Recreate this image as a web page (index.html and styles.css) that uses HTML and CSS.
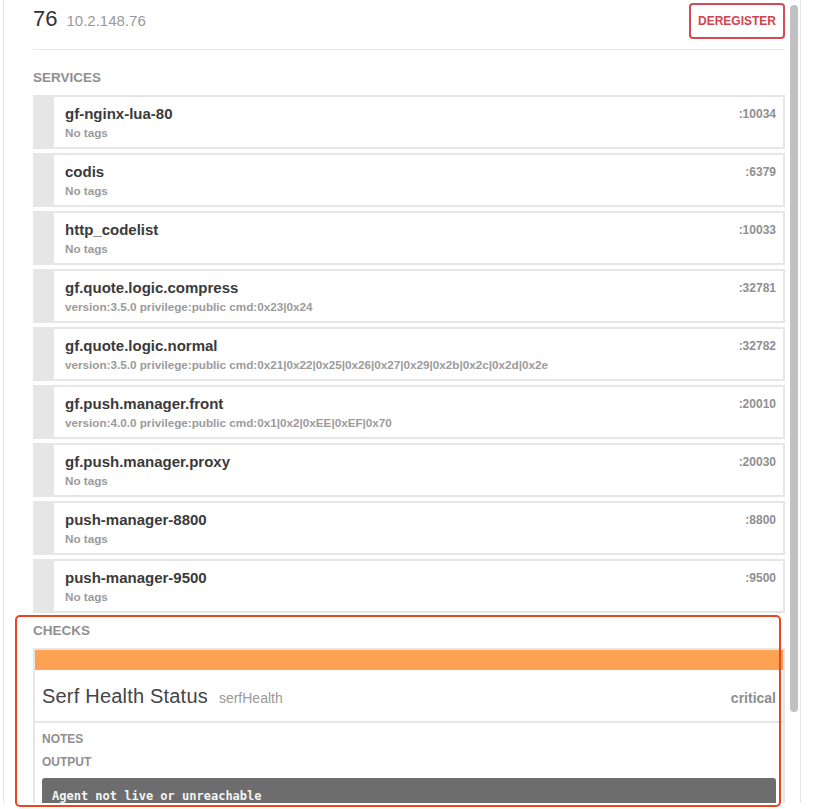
FILE: index.html
```html
<!DOCTYPE html>
<html>
<head>
<meta charset="utf-8">
<link rel="stylesheet" href="styles.css">
</head>
<body>
<div class="frame">
  <div class="content">
    <div class="node-header">
      <h1 class="node-title">76<span class="node-ip">10.2.148.76</span></h1>
      <button class="btn-deregister">DEREGISTER</button>
    </div>

    <h2 class="section-title services-title">SERVICES</h2>
    <div class="service-list">
      <div class="service">
        <div class="service-main"><div class="service-name">gf-nginx-lua-80</div><div class="service-tags">No tags</div></div>
        <div class="service-port">:10034</div>
      </div>
      <div class="service">
        <div class="service-main"><div class="service-name">codis</div><div class="service-tags">No tags</div></div>
        <div class="service-port">:6379</div>
      </div>
      <div class="service">
        <div class="service-main"><div class="service-name">http_codelist</div><div class="service-tags">No tags</div></div>
        <div class="service-port">:10033</div>
      </div>
      <div class="service">
        <div class="service-main"><div class="service-name">gf.quote.logic.compress</div><div class="service-tags">version:3.5.0 privilege:public cmd:0x23|0x24</div></div>
        <div class="service-port">:32781</div>
      </div>
      <div class="service">
        <div class="service-main"><div class="service-name">gf.quote.logic.normal</div><div class="service-tags">version:3.5.0 privilege:public cmd:0x21|0x22|0x25|0x26|0x27|0x29|0x2b|0x2c|0x2d|0x2e</div></div>
        <div class="service-port">:32782</div>
      </div>
      <div class="service">
        <div class="service-main"><div class="service-name">gf.push.manager.front</div><div class="service-tags">version:4.0.0 privilege:public cmd:0x1|0x2|0xEE|0xEF|0x70</div></div>
        <div class="service-port">:20010</div>
      </div>
      <div class="service">
        <div class="service-main"><div class="service-name">gf.push.manager.proxy</div><div class="service-tags">No tags</div></div>
        <div class="service-port">:20030</div>
      </div>
      <div class="service">
        <div class="service-main"><div class="service-name">push-manager-8800</div><div class="service-tags">No tags</div></div>
        <div class="service-port">:8800</div>
      </div>
      <div class="service">
        <div class="service-main"><div class="service-name">push-manager-9500</div><div class="service-tags">No tags</div></div>
        <div class="service-port">:9500</div>
      </div>
    </div>

    <h2 class="section-title checks-title">CHECKS</h2>
    <div class="check">
      <div class="check-status-bar"></div>
      <div class="check-head">
        <div class="check-title">Serf Health Status<span class="check-id">serfHealth</span></div>
        <div class="check-state">critical</div>
      </div>
      <div class="check-body">
        <div class="check-label">NOTES</div>
        <div class="check-label output-label">OUTPUT</div>
        <pre class="check-output">Agent not live or unreachable</pre>
      </div>
    </div>
  </div>
  <div class="scrollbar"><div class="scroll-thumb"></div></div>
</div>
<div class="highlight"></div>
</body>
</html>
```

FILE: styles.css
```css
html, body {
  margin: 0;
  padding: 0;
  background: #fff;
}
body {
  position: relative;
  font-family: "Liberation Sans", Arial, sans-serif;
  color: #333;
  height: 809px;
  overflow: hidden;
}
.frame {
  margin-left: 3px;
  width: 796px;
  height: 803px;
  border-left: 1px solid #e6e6e6;
  border-right: 1px solid #e6e6e6;
  display: flex;
  overflow: hidden;
}
.content {
  flex: 1;
  padding: 0 1px 0 29px;
  min-width: 0;
}
.scrollbar {
  width: 14px;
  flex: none;
}
.scroll-thumb {
  margin: 5px 2px 0 4px;
  width: 8px;
  height: 707px;
  border-radius: 4px;
  background: #c1c1c1;
}

/* header */
.node-header {
  display: flex;
  justify-content: space-between;
  align-items: flex-start;
  height: 49px;
  border-bottom: 1px solid #e8e8e8;
}
.node-title {
  margin: 6px 0 0;
  font-size: 22px;
  line-height: 26px;
  font-weight: normal;
  color: #333;
}
.node-ip {
  margin-left: 9px;
  font-size: 15px;
  color: #999;
}
.btn-deregister {
  margin-top: 3px;
  width: 96px;
  height: 36px;
  box-sizing: border-box;
  border: 2px solid #d14a54;
  border-radius: 4px;
  background: #fff;
  color: #d0434d;
  font-family: "Liberation Sans", Arial, sans-serif;
  font-weight: bold;
  font-size: 12px;
  padding: 0;
}

/* section titles */
.section-title {
  margin: 0;
  font-size: 13.5px;
  line-height: 18px;
  font-weight: bold;
  color: #8f8f8f;
}
.services-title {
  margin: 19px 0 8px;
}
.checks-title {
  margin: 9px 0 8px;
}

/* services */
.service-list {
  display: flex;
  flex-direction: column;
  gap: 4px;
}
.service {
  display: flex;
  justify-content: space-between;
  align-items: flex-start;
  height: 54px;
  box-sizing: border-box;
  border: 2px solid #e6e6e6;
  border-left: 21px solid #e6e6e6;
  padding: 8px 7px 6px 11px;
}
.service-name {
  font-size: 15px;
  line-height: 18px;
  font-weight: bold;
  color: #3a3a3a;
}
.service-tags {
  margin-top: 2px;
  font-size: 11.7px;
  line-height: 16px;
  font-weight: bold;
  color: #9b9b9b;
}
.service-port {
  margin-top: 1px;
  font-size: 12px;
  line-height: 16px;
  font-weight: bold;
  color: #8f8f8f;
}

/* check */
.check {
  border: 2px solid #e6e6e6;
  border-bottom: none;
}
.check-status-bar {
  height: 20px;
  background: #ffa153;
}
.check-head {
  display: flex;
  justify-content: space-between;
  align-items: baseline;
  padding: 14px 7px 11px;
  border-bottom: 2px solid #e6e6e6;
}
.check-title {
  font-size: 20px;
  line-height: 24px;
  letter-spacing: 0.2px;
  color: #444;
}
.check-id {
  margin-left: 11px;
  font-size: 14px;
  letter-spacing: 0;
  color: #999;
}
.check-state {
  font-size: 14px;
  font-weight: bold;
  color: #8f8f8f;
}
.check-body {
  padding: 8px 7px 0;
}
.check-label {
  font-size: 12px;
  line-height: 16px;
  font-weight: bold;
  color: #8f8f8f;
}
.output-label {
  margin-top: 7px;
}
.check-output {
  margin: 8px 0 0;
  padding: 10px 10px;
  background: #6d6d6d;
  border-radius: 3px;
  color: #f4f4f4;
  font-family: "DejaVu Sans Mono", monospace;
  font-weight: bold;
  font-size: 12px;
  line-height: 16px;
}

/* annotation overlay */
.highlight {
  position: absolute;
  left: 15px;
  top: 615px;
  width: 766px;
  height: 192px;
  box-sizing: border-box;
  border: 2.5px solid #e9461d;
  border-radius: 5px;
  pointer-events: none;
}
```
